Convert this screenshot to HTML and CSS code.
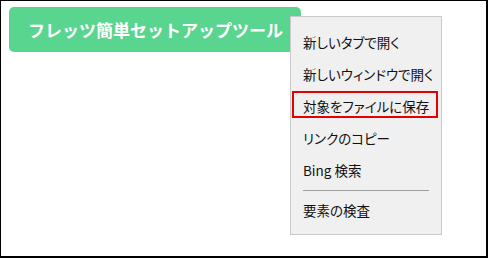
FILE: index.html
```html
<!DOCTYPE html>
<html lang="ja">
<head>
    <meta charset="UTF-8">
    <meta name="viewport" content="width=device-width, initial-scale=1.0">
    <title>フレッツ簡単セットアップツール</title>
    <link rel="stylesheet" href="styles.css">
</head>
<body>
    <div class="frame">
        <a class="tool-button" href="#">フレッツ簡単セットアップツール</a>

        <!-- Context menu -->
        <ul class="context-menu">
            <li class="menu-item">新しいタブで開く</li>
            <li class="menu-item">新しいウィンドウで開く</li>
            <li class="menu-item marked">対象をファイルに保存</li>
            <li class="menu-item">リンクのコピー</li>
            <li class="menu-item">Bing 検索</li>
            <li class="menu-separator"></li>
            <li class="menu-item">要素の検査</li>
        </ul>
    </div>
</body>
</html>
```

FILE: styles.css
```css
* {
    box-sizing: border-box;
}

body {
    margin: 0;
    font-family: "Noto Sans CJK JP", "Noto Sans", sans-serif;
    background-color: #fff;
}

.frame {
    position: relative;
    width: 488px;
    height: 258px;
    border-style: solid;
    border-color: #000;
    border-width: 1px 2px 2px 1px;
    padding: 6px 8px;
}

.tool-button {
    display: flex;
    align-items: center;
    width: 292px;
    height: 45px;
    padding-left: 19px;
    background-color: #5ad590;
    border-radius: 5px;
    color: #fff;
    font-size: 17px;
    font-weight: bold;
    text-decoration: none;
}

.context-menu {
    position: absolute;
    left: 289px;
    top: 15px;
    width: 152px;
    height: 219px;
    margin: 0;
    padding: 9px 0;
    list-style: none;
    background-color: #f0f0f0;
    border: 1px solid #cacaca;
}

.menu-item {
    position: relative;
    display: flex;
    align-items: center;
    height: 32px;
    padding-left: 12px;
    font-size: 13.5px;
    color: #111;
    font-feature-settings: "palt";
    white-space: nowrap;
}

.menu-item.marked::after {
    content: "";
    position: absolute;
    top: 1px;
    left: 1px;
    right: 3px;
    bottom: 4px;
    border: 2px solid #e60000;
}

.menu-separator {
    height: 8px;
    margin: 0 12px;
    display: flex;
    align-items: center;
}

.menu-separator::before {
    content: "";
    flex: 1;
    height: 1px;
    background-color: #a0a0a0;
}
```
